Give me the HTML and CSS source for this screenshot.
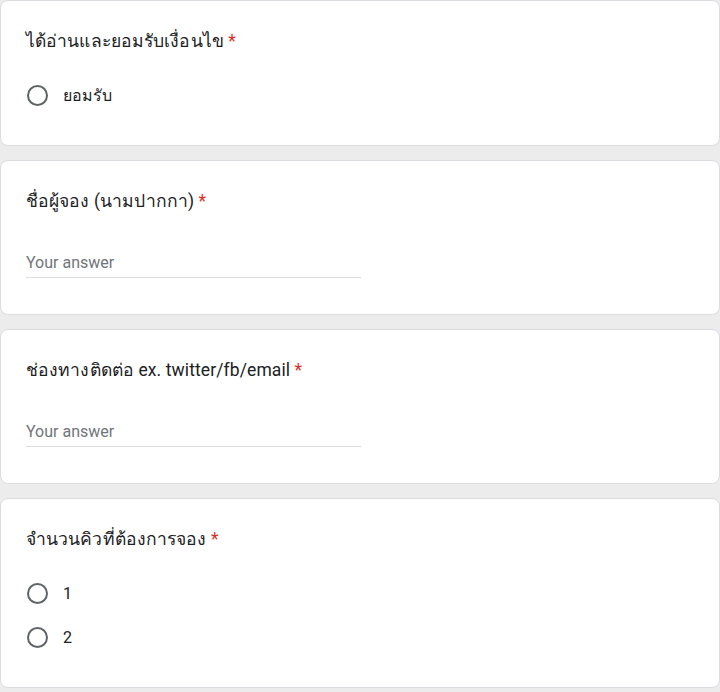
FILE: index.html
```html
<!DOCTYPE html>
<html lang="th">
<head>
<meta charset="UTF-8">
<meta name="viewport" content="width=device-width, initial-scale=1.0">
<title>แบบฟอร์มจองคิว</title>
<link rel="stylesheet" href="styles.css">
</head>
<body>
<div class="form-list">
    <div class="question">
        <div class="question-title">ได้อ่านและยอมรับเงื่อนไข <span class="required">*</span></div>
        <label class="option">
            <span class="radio"></span>
            <span class="option-text">ยอมรับ</span>
        </label>
    </div>

    <div class="question">
        <div class="question-title">ชื่อผู้จอง (นามปากกา) <span class="required">*</span></div>
        <div class="answer">
            <input type="text" placeholder="Your answer">
        </div>
    </div>

    <div class="question">
        <div class="question-title">ช่องทางติดต่อ ex. twitter/fb/email <span class="required">*</span></div>
        <div class="answer">
            <input type="text" placeholder="Your answer">
        </div>
    </div>

    <div class="question">
        <div class="question-title">จำนวนคิวที่ต้องการจอง <span class="required">*</span></div>
        <label class="option">
            <span class="radio"></span>
            <span class="option-text">1</span>
        </label>
        <label class="option">
            <span class="radio"></span>
            <span class="option-text">2</span>
        </label>
    </div>
</div>
</body>
</html>
```

FILE: styles.css
```css
body {
    margin: 0;
    background-color: #ececec;
    font-family: Roboto, Arial, sans-serif;
    color: #202124;
}

.form-list {
    display: flex;
    flex-direction: column;
    gap: 14px;
}

.question {
    background-color: white;
    border: 1px solid #dadce0;
    border-radius: 8px;
    padding: 28px 24px 28px 25px;
}

.question-title {
    font-size: 17.5px;
    line-height: 24px;
    margin-bottom: 20px;
    letter-spacing: 0.1px;
}
.required {
    color: #d93025;
}

.option {
    display: flex;
    align-items: center;
    height: 44px;
    cursor: pointer;
}
.radio {
    width: 21px;
    height: 21px;
    box-sizing: border-box;
    border: 2px solid #5f6368;
    border-radius: 50%;
    margin-left: 1px;
}
.option-text {
    margin-left: 15px;
    font-size: 16px;
}

.answer {
    width: 50%;
    padding-top: 17px;
    margin-bottom: 8px;
}
.answer input {
    width: 100%;
    box-sizing: border-box;
    border: none;
    border-bottom: 1px solid #dadce0;
    padding: 0 0 3px 0;
    font-family: Roboto, Arial, sans-serif;
    font-size: 16px;
    line-height: 24px;
    height: 28px;
    color: #202124;
    outline: none;
}
.answer input::placeholder {
    color: #70757a;
}
```
